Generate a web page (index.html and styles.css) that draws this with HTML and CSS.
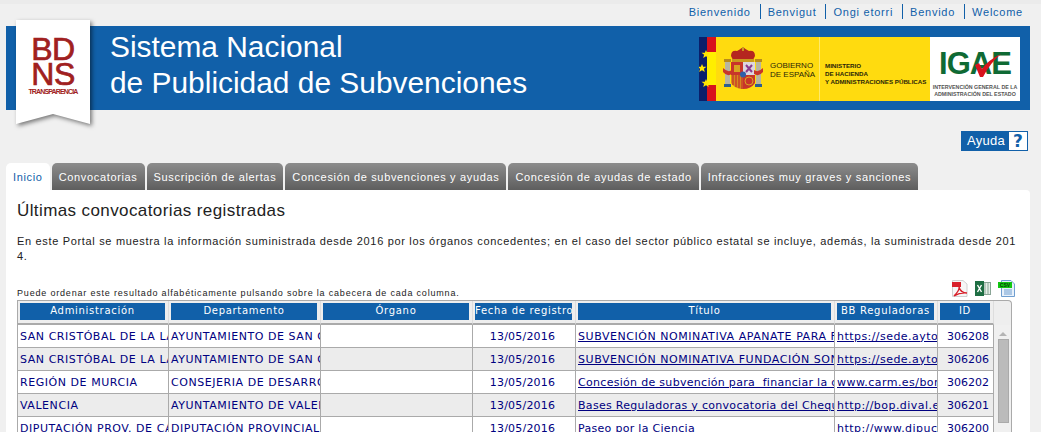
FILE: index.html
```html
<!DOCTYPE html>
<html lang="es">
<head>
    <meta charset="UTF-8">
    <title>Sistema Nacional de Publicidad de Subvenciones</title>
    <link rel="stylesheet" href="styles.css">
</head>
<body>
    <nav class="lang-bar">
        <a href="#">Bienvenido</a>
        <a href="#">Benvigut</a>
        <a href="#">Ongi etorri</a>
        <a href="#">Benvido</a>
        <a href="#">Welcome</a>
    </nav>

    <header class="banner">
        <div class="ribbon">
            <svg class="ribbon-shape" width="74" height="104" viewBox="0 0 74 104">
                <polygon points="0,0 74,0 74,104 37,94 0,104" fill="#ffffff"/>
            </svg>
            <div class="ribbon-logo">
                <span class="logo-line">BD</span>
                <span class="logo-line">NS</span>
                <span class="logo-sub">TRANSPARENCIA</span>
            </div>
        </div>
        <h1 class="banner-title">Sistema Nacional<br>de Publicidad de Subvenciones</h1>
        <div class="gov-logo">
            <svg class="flag-strip" width="17" height="64" viewBox="0 0 17 64">
                <rect width="9" height="64" fill="#0a1f6b"/>
                <rect x="8" width="9" height="64" fill="#ffee00"/>
                <rect x="8" width="9" height="15" fill="#d8121c"/>
                <rect x="8" y="48" width="9" height="16" fill="#d8121c"/>
                <polygon points="7,13 8.200,15.800 11.500,15.800 8.900,17.800 9.800,21 7,19.200 4.200,21 5.100,17.800 2.500,15.800 5.800,15.800" fill="#ffe600"/>
                <polygon points="3,27 4.200,29.800 7.500,29.800 4.900,31.800 5.800,35 3,33.200 0.200,35 1.100,31.800 -1.500,29.800 1.800,29.800" fill="#ffe600"/>
                <polygon points="7,42 8.200,44.800 11.500,44.800 8.900,46.800 9.800,50 7,48.200 4.200,50 5.100,46.800 2.500,44.800 5.800,44.800" fill="#ffe600"/>
            </svg>
            <div class="gov-yellow">
                <svg class="shield" width="42" height="42" viewBox="0 0 42 42">
                    <!-- columns -->
                    <rect x="3" y="15" width="5" height="22" fill="#b8b4a0"/>
                    <rect x="34" y="15" width="5" height="22" fill="#b8b4a0"/>
                    <rect x="2" y="12" width="7" height="3" fill="#b88a1c"/>
                    <rect x="33" y="12" width="7" height="3" fill="#b88a1c"/>
                    <rect x="2" y="37" width="7" height="3" fill="#2f5f8c"/>
                    <rect x="33" y="37" width="7" height="3" fill="#2f5f8c"/>
                    <!-- crown -->
                    <path d="M9 9 Q 9 3 15 4 Q 20 1 21 0 Q 23 2 27 4 Q 33 3 33 9 L31 13 H11 Z" fill="#b5271f"/>
                    <path d="M10 12 H32 V15 H10 Z" fill="#c99a1e"/>
                    <rect x="20" y="0" width="2" height="4" fill="#c99a1e"/>
                    <!-- shield quarters -->
                    <rect x="9" y="15" width="12" height="13" fill="#c8352a"/>
                    <rect x="21" y="15" width="12" height="13" fill="#dcd6de"/>
                    <path d="M9 28 H21 V42 Q 13 42 9 36 Z" fill="#d58a1e"/>
                    <path d="M11 28 V38 M14 28 V40 M17 28 V41 M20 28 V42" stroke="#c8352a" stroke-width="1.300"/>
                    <path d="M21 28 H33 V36 Q 29 42 21 42 Z" fill="#c8352a"/>
                    <rect x="12" y="18" width="6" height="7" fill="#d9a520"/>
                    <path d="M24 18 L30 25 M30 18 L24 25" stroke="#8a3a8e" stroke-width="2"/>
                    <circle cx="27" cy="34" r="4" fill="none" stroke="#d9a520"/>
                    <circle cx="21" cy="27.500" r="3" fill="#2f5fa8"/>
                    <!-- ribbons -->
                    <path d="M1 21 Q 6 26 10 23 L10 27 Q 5 30 1 25 Z" fill="#c8352a"/>
                    <path d="M41 21 Q 36 26 32 23 L32 27 Q 37 30 41 25 Z" fill="#c8352a"/>
                </svg>
                <div class="gov-spain">GOBIERNO<br>DE ESPAÑA</div>
                <div class="gov-divider"></div>
                <div class="gov-ministry">MINISTERIO<br>DE HACIENDA<br>Y ADMINISTRACIONES PÚBLICAS</div>
            </div>
            <div class="igae">
                <div class="igae-mark">IGAE
                    <svg class="igae-check" width="28" height="26" viewBox="0 0 28 26">
                        <path d="M1 12 L5 10 L8 16 Q 14 7 27 1 Q 16 10 9 24 H6 Z" fill="#d8121c"/>
                    </svg>
                </div>
                <div class="igae-text">INTERVENCIÓN GENERAL DE LA<br>ADMINISTRACIÓN DEL ESTADO</div>
            </div>
        </div>
    </header>

    <div class="help-row">
        <a class="help-btn" href="#">
            <span class="help-label">Ayuda</span>
            <span class="help-icon">?</span>
        </a>
    </div>

    <ul class="tabs">
        <li class="tab active">Inicio</li>
        <li class="tab">Convocatorias</li>
        <li class="tab">Suscripción de alertas</li>
        <li class="tab">Concesión de subvenciones y ayudas</li>
        <li class="tab">Concesión de ayudas de estado</li>
        <li class="tab">Infracciones muy graves y sanciones</li>
    </ul>

    <main class="panel">
        <h2 class="panel-title">Últimas convocatorias registradas</h2>
        <p class="intro">En este Portal se muestra la información suministrada desde 2016 por los órganos concedentes; en el caso del sector público estatal se incluye, además, la suministrada desde 201<br>4.</p>

        <div class="table-tools">
            <span class="sort-hint">Puede ordenar este resultado alfabéticamente pulsando sobre la cabecera de cada columna.</span>
            <div class="export-icons">
                <svg width="18" height="17" viewBox="0 0 18 17">
                    <path d="M2.500 0.500 H13 L17 4 V16.500 H2.500 Z" fill="#f6f6f6" stroke="#d0d0d0"/>
                    <rect x="2" y="2" width="9" height="5" fill="#d8202a"/>
                    <path d="M4 16 C 8 12 9.500 9 9 7 C 10 11 12.500 13 17 13 C 12 12.500 8 13.500 4 16 Z" fill="none" stroke="#d8202a" stroke-width="1.400"/>
                </svg>
                <svg width="16" height="15" viewBox="0 0 16 15">
                    <rect x="6.500" y="1.500" width="9" height="12" fill="#e6efe8" stroke="#8aa596"/>
                    <path d="M10 2 V13 M13 2 V13" stroke="#8aa596"/>
                    <rect x="0" y="0" width="9" height="15" fill="#1f6e43"/>
                    <path d="M2.500 4 L6.500 11 M6.500 4 L2.500 11" stroke="#ffffff" stroke-width="1.400"/>
                </svg>
                <svg width="17" height="17" viewBox="0 0 17 17">
                    <path d="M3.500 0.500 H13 L16.500 4 V16.500 H3.500 Z" fill="#e8f1fb" stroke="#6f9ed0"/>
                    <path d="M6 10 H14 M6 12 H14 M6 14 H14" stroke="#6f9ed0"/>
                    <rect x="0" y="2" width="14" height="6" fill="#12c812"/>
                    <text class="csv-label" x="7" y="7">CSV</text>
                </svg>
            </div>
        </div>

        <div class="grid-box">
            <table class="grid">
                <colgroup>
                    <col class="col-admin"><col class="col-dept"><col class="col-organo"><col class="col-fecha"><col class="col-titulo"><col class="col-bases"><col class="col-id">
                </colgroup>
                <thead>
                    <tr>
                        <th><span class="th-label">Administración</span></th>
                        <th><span class="th-label">Departamento</span></th>
                        <th><span class="th-label">Órgano</span></th>
                        <th><span class="th-label">Fecha de registro</span></th>
                        <th><span class="th-label">Título</span></th>
                        <th><span class="th-label">BB Reguladoras</span></th>
                        <th><span class="th-label">ID</span></th>
                    </tr>
                </thead>
                <tbody>
                    <tr>
                        <td>SAN CRISTÓBAL DE LA LAGUNA</td>
                        <td>AYUNTAMIENTO DE SAN CRISTÓBAL</td>
                        <td></td>
                        <td class="date">13/05/2016</td>
                        <td><a href="#">SUBVENCIÓN NOMINATIVA APANATE PARA FORMACIÓN</a></td>
                        <td><a class="url" href="#">https://sede.aytolalaguna.es</a></td>
                        <td class="num">306208</td>
                    </tr>
                    <tr class="alt">
                        <td>SAN CRISTÓBAL DE LA LAGUNA</td>
                        <td>AYUNTAMIENTO DE SAN CRISTÓBAL</td>
                        <td></td>
                        <td class="date">13/05/2016</td>
                        <td><a href="#">SUBVENCIÓN NOMINATIVA FUNDACIÓN SONSOLES</a></td>
                        <td><a class="url" href="#">https://sede.aytolalaguna.es</a></td>
                        <td class="num">306206</td>
                    </tr>
                    <tr>
                        <td>REGIÓN DE MURCIA</td>
                        <td>CONSEJERIA DE DESARROLLO</td>
                        <td></td>
                        <td class="date">13/05/2016</td>
                        <td><a class="mixed" href="#">Concesión de subvención para&nbsp; financiar la organización</a></td>
                        <td><a class="url" href="#">www.carm.es/borm</a></td>
                        <td class="num">306202</td>
                    </tr>
                    <tr class="alt">
                        <td>VALENCIA</td>
                        <td>AYUNTAMIENTO DE VALENCIA</td>
                        <td></td>
                        <td class="date">13/05/2016</td>
                        <td><a class="mixed" href="#">Bases Reguladoras y convocatoria del Cheque Escolar</a></td>
                        <td><a class="url" href="#">http://bop.dival.es</a></td>
                        <td class="num">306201</td>
                    </tr>
                    <tr>
                        <td>DIPUTACIÓN PROV. DE CÁCERES</td>
                        <td>DIPUTACIÓN PROVINCIAL</td>
                        <td></td>
                        <td class="date">13/05/2016</td>
                        <td><a class="mixed" href="#">Paseo por la Ciencia</a></td>
                        <td><a class="url" href="#">http://www.dipucaceres.es</a></td>
                        <td class="num">306200</td>
                    </tr>
                </tbody>
            </table>
            <div class="scrollbar">
                <span class="scroll-arrow"></span>
                <span class="scroll-thumb"></span>
            </div>
        </div>
    </main>
</body>
</html>
```

FILE: styles.css
```css
:root {
    --blue: #1160a9;
    --page: #f0f0f0;
    --grid-line: #aaaaaa;
    --cell-text: #000080;
}

html, body {
    height: 432px;
    overflow: hidden;
}

body {
    margin: 0;
    background: var(--page);
    font-family: "Liberation Sans", Arial, sans-serif;
    color: #222222;
    border-top: 4px solid #ebebeb;
    box-sizing: border-box;
}

.lang-bar {
    display: flex;
    justify-content: flex-end;
    height: 22px;
    padding-right: 18px;
    box-sizing: border-box;
    font-size: 11px;
    letter-spacing: 0.75px;
}

.lang-bar a {
    color: var(--blue);
    text-decoration: none;
    height: 15px;
    line-height: 16px;
    padding: 0 9px 0 7px;
    border-left: 1px solid var(--blue);
}

.lang-bar a:first-child {
    border-left: none;
}

.lang-bar a:last-child {
    padding-right: 0;
}

.banner {
    position: relative;
    display: flex;
    justify-content: space-between;
    width: 1024px;
    height: 84px;
    margin-left: 6px;
    background: var(--blue);
}

.ribbon {
    position: absolute;
    left: 10px;
    top: -6px;
    width: 74px;
    height: 104px;
}

.ribbon-shape {
    display: block;
    filter: drop-shadow(2px 2px 2px rgba(0, 0, 0, 0.5));
}

.ribbon-logo {
    position: absolute;
    left: 12px;
    top: 17px;
    width: 50px;
    color: #a02020;
    text-align: center;
}

.logo-line {
    display: block;
    font-size: 32px;
    line-height: 25px;
    letter-spacing: -0.5px;
    -webkit-text-stroke: 0.7px #a02020;
}

.logo-sub {
    display: block;
    font-size: 7px;
    line-height: 9px;
    font-weight: bold;
    white-space: nowrap;
    letter-spacing: -0.85px;
}

.banner-title {
    margin: 3px 0 0 104px;
    font-size: 29.900px;
    line-height: 36px;
    font-weight: normal;
    color: #ffffff;
}

.gov-logo {
    display: flex;
    height: 64px;
    margin: 11px 10px 0 0;
}

.flag-strip {
    display: block;
}

.gov-yellow {
    display: flex;
    align-items: center;
    width: 214px;
    height: 64px;
    background: #ffdb0f;
    color: #2a2608;
}

.shield {
    flex: none;
    align-self: flex-start;
    margin: 10px 6px 0 6px;
}

.gov-spain {
    width: 49px;
    padding-top: 2px;
    font-size: 8px;
    line-height: 9px;
    white-space: nowrap;
}

.gov-divider {
    align-self: stretch;
    width: 1px;
    margin-right: 5px;
    background: #ffe96a;
}

.gov-ministry {
    padding-top: 10px;
    font-size: 6.200px;
    line-height: 8px;
    font-weight: bold;
    white-space: nowrap;
}

.igae {
    width: 90px;
    height: 64px;
    background: #ffffff;
    text-align: center;
}

.igae-mark {
    position: relative;
    padding-top: 12px;
    height: 28px;
    font-size: 31px;
    line-height: 30px;
    font-weight: bold;
    color: #0f6a34;
    letter-spacing: -1px;
}

.igae-check {
    position: absolute;
    left: 44px;
    top: 16px;
}

.igae-text {
    margin-top: 7px;
    font-size: 5.300px;
    line-height: 7px;
    font-weight: bold;
    color: #555555;
    white-space: nowrap;
}

.help-row {
    display: flex;
    justify-content: flex-end;
    height: 53px;
    padding: 21px 13px 0 0;
    box-sizing: border-box;
}

.help-btn {
    display: flex;
    height: 20px;
    box-sizing: border-box;
    border: 1px solid var(--blue);
    background: var(--blue);
    color: #ffffff;
    font-size: 13px;
    text-decoration: none;
}

.help-label {
    width: 47px;
    padding-left: 5px;
    box-sizing: border-box;
    line-height: 18px;
    letter-spacing: 0.3px;
}

.help-icon {
    width: 18px;
    background: #ffffff;
    color: var(--blue);
    font-family: "DejaVu Sans", Verdana, sans-serif;
    font-size: 17px;
    font-weight: bold;
    line-height: 18px;
    text-align: center;
}

.tabs {
    display: flex;
    gap: 2px;
    height: 27px;
    margin: 0 0 0 6px;
    padding: 0;
    list-style: none;
}

.tab {
    height: 27px;
    padding: 0 7px;
    line-height: 29px;
    box-sizing: border-box;
    border-radius: 5px 5px 0 0;
    background: linear-gradient(#8c8c8c, #5e5e5e);
    color: #ffffff;
    font-size: 11px;
    letter-spacing: 0.66px;
    white-space: nowrap;
}

.tab.active {
    background: #ffffff;
    color: var(--blue);
}

.panel {
    width: 1024px;
    height: 242px;
    margin-left: 6px;
    padding: 11px 11px 0 11px;
    box-sizing: border-box;
    background: #ffffff;
    border-radius: 0 4px 0 0;
}

.panel-title {
    margin: 0;
    font-size: 17px;
    line-height: 20px;
    font-weight: normal;
    letter-spacing: 0.4px;
    color: #222222;
}

.intro {
    margin: 13px 0 0 0;
    font-size: 11px;
    line-height: 15px;
    letter-spacing: 0.67px;
    white-space: nowrap;
    color: #222222;
}

.table-tools {
    display: flex;
    justify-content: space-between;
    align-items: flex-end;
    height: 21px;
    margin-top: 15px;
}

.sort-hint {
    font-size: 9px;
    line-height: 11px;
    letter-spacing: 0.81px;
    padding-bottom: 1px;
}

.export-icons {
    display: flex;
    align-items: center;
    gap: 7px;
    margin-right: 4px;
    padding-bottom: 3px;
}

.export-icons svg {
    display: block;
}

.csv-label {
    font-family: "Liberation Sans", Arial, sans-serif;
    font-size: 5px;
    font-weight: bold;
    text-anchor: middle;
    fill: #0a3a0a;
}

.grid-box {
    position: relative;
    width: 995px;
    height: 132px;
    border: 1px solid var(--grid-line);
    border-bottom: none;
    border-radius: 0 4px 0 0;
    overflow: hidden;
    box-sizing: border-box;
    background: #eeeeee;
}

.grid {
    width: 976px;
    table-layout: fixed;
    border-collapse: separate;
    border-spacing: 0;
    font-family: "DejaVu Sans", Verdana, sans-serif;
    font-size: 11px;
    letter-spacing: 0.55px;
}

.col-admin { width: 151px; }
.col-dept { width: 152px; }
.col-organo { width: 152px; }
.col-fecha { width: 103px; }
.col-titulo { width: 259px; }
.col-bases { width: 103px; }
.col-id { width: 56px; }

.grid th {
    height: 24px;
    padding: 2px 3px 0 2px;
    box-sizing: border-box;
    vertical-align: top;
    background: #eeeeee;
    border-right: 1px solid #dddddd;
    border-bottom: 2px solid var(--grid-line);
    font-size: 10px;
    font-weight: normal;
    letter-spacing: 0.7px;
    color: #ffffff;
}

.th-label {
    display: block;
    height: 17px;
    line-height: 15px;
    overflow: hidden;
    white-space: nowrap;
    background: var(--blue);
}

.grid td {
    height: 23px;
    padding: 0 0 0 2px;
    box-sizing: border-box;
    background: #ffffff;
    border-right: 1px solid var(--grid-line);
    border-bottom: 1px solid var(--grid-line);
    color: var(--cell-text);
    overflow: hidden;
    white-space: nowrap;
}

.grid tr.alt td {
    background: #ececec;
}

.grid a {
    color: var(--cell-text);
}

.grid a.mixed {
    letter-spacing: 0.3px;
}

.grid a.url {
    letter-spacing: 0.45px;
}

.grid td.date {
    padding: 0 3px 0 0;
    text-align: center;
    letter-spacing: 0.2px;
}

.grid td.num {
    text-align: right;
    padding-right: 4px;
    letter-spacing: 0;
}

.scrollbar {
    position: absolute;
    right: 0;
    top: 24px;
    bottom: 0;
    width: 17px;
    background: #f0f0f0;
}

.scroll-arrow {
    position: absolute;
    top: 7px;
    left: 5px;
    width: 0;
    height: 0;
    border-left: 4px solid transparent;
    border-right: 4px solid transparent;
    border-bottom: 4px solid #b4b4b4;
}

.scroll-thumb {
    position: absolute;
    top: 14px;
    left: 4px;
    width: 11px;
    height: 84px;
    background: #bbbbbb;
    border: 1px solid #aaaaaa;
    box-sizing: border-box;
}
```
